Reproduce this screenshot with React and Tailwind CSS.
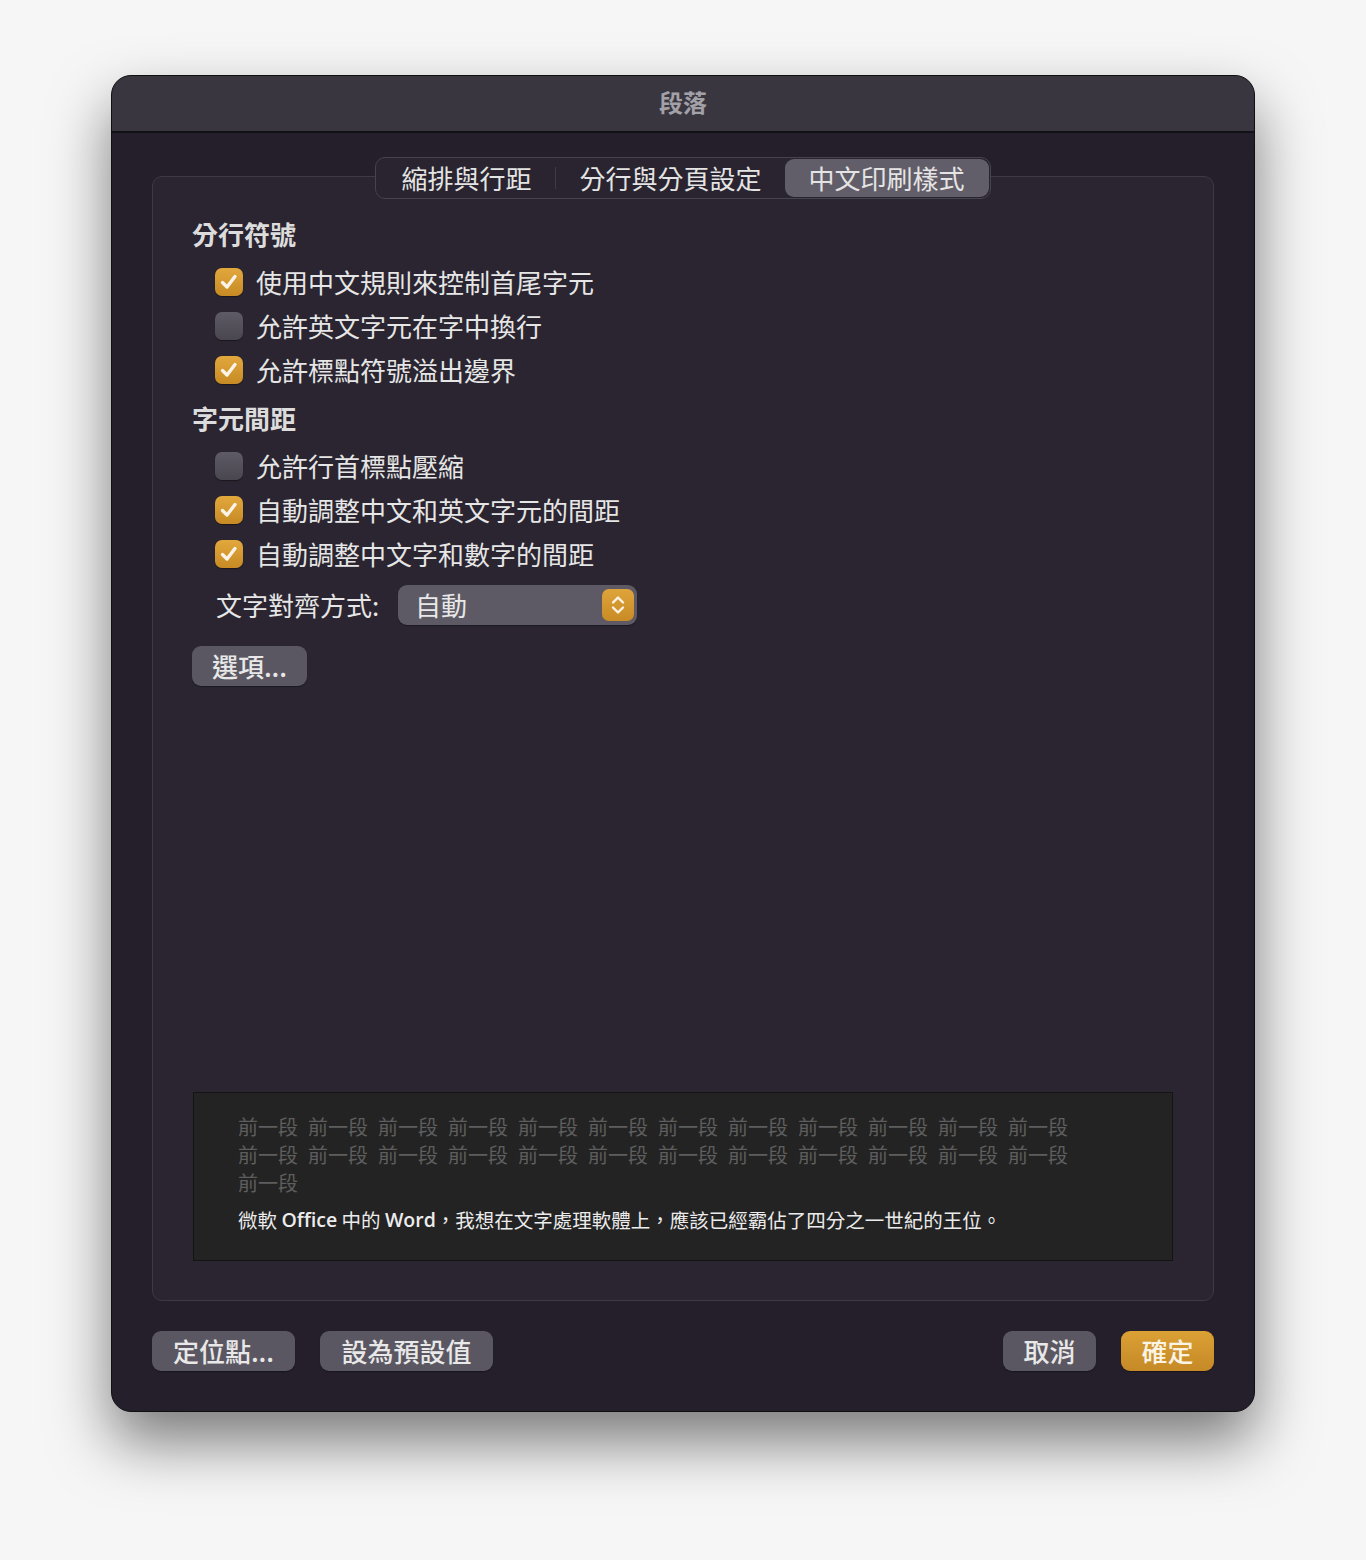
import { useState } from 'react'

const FONT = { fontFamily: '"Noto Sans CJK TC", "Noto Sans", sans-serif' }

function CheckBox({ checked }) {
  return checked ? (
    <span className="flex h-[28px] w-[28px] shrink-0 items-center justify-center rounded-[7px] bg-gradient-to-b from-[#e2a83c] to-[#c78a24] shadow-[0_1px_1px_rgba(0,0,0,0.4)]">
      <svg width="22" height="22" viewBox="0 0 22 22" fill="none">
        <path d="M4.5 11.5 L9 16 L17 5.5" stroke="#fbf4e6" strokeWidth="3.4" strokeLinecap="round" strokeLinejoin="round" />
      </svg>
    </span>
  ) : (
    <span className="block h-[28px] w-[28px] shrink-0 rounded-[7px] bg-gradient-to-b from-[#5f5b66] to-[#4a4650] shadow-[0_1px_1px_rgba(0,0,0,0.4)]" />
  )
}

function Row({ checked, label }) {
  return (
    <div className="flex h-[44px] items-center pl-[22px]">
      <CheckBox checked={checked} />
      <span className="ml-[13px] text-[26px] leading-none text-[#e6e6e6]">{label}</span>
    </div>
  )
}

function Heading({ children, className = '' }) {
  return (
    <div className={'-ml-px flex h-[44px] items-center text-[26px] font-bold leading-none text-[#dcdcdc] ' + className}>
      {children}
    </div>
  )
}

function Btn({ children, className = '' }) {
  return (
    <button
      className={
        'flex h-[40px] items-center justify-center rounded-[9px] bg-[#5b5762] text-[26px] font-medium leading-none text-[#e8e8e8] shadow-[0_1px_1px_rgba(0,0,0,0.35)] ' +
        className
      }
    >
      {children}
    </button>
  )
}

const tabs = ['縮排與行距', '分行與分頁設定', '中文印刷樣式']

export default function App() {
  const [tab] = useState(2)
  const dim = Array.from({ length: 12 }, () => '前一段')

  return (
    <div className="h-[1560px] w-[1366px] bg-[#f6f6f6] pt-[75px]" style={FONT}>
      <div className="ml-[111px] flex h-[1337px] w-[1144px] flex-col overflow-hidden rounded-[20px] border border-[#101012] bg-[#241f2a] shadow-[0_30px_60px_rgba(0,0,0,0.5)]">
        {/* title bar */}
        <div className="flex h-[57px] shrink-0 items-center justify-center border-b-2 border-[#121115] bg-[#39363f] pb-[4px]">
          <span className="text-[24px] font-bold leading-none text-[#a3a1a8]">段落</span>
        </div>

        <div className="flex flex-1 flex-col px-10">
          {/* group box */}
          <div className="mt-[43px] flex h-[1125px] flex-col rounded-[10px] border border-[#3e3a44] bg-[#2a2530] px-10 pb-[39px]">
            <div className="-mt-[20px] flex justify-center">
              <div className="flex h-[42px] items-center rounded-[10px] border border-[#47434d] bg-[#29242f] p-[1px]">
                {tabs.map((t, i) => (
                  <div key={t} className="flex h-full items-center">
                    {i === 1 && <span className="h-[22px] w-px bg-[#403c46]" />}
                    <span
                      className={
                        'flex h-full items-center text-[26px] leading-none text-[#e4e4e4] ' +
                        (i === tab
                          ? 'ml-[23px] rounded-[9px] bg-[#625e69] px-[24px]'
                          : i === 0
                          ? 'pl-[24px] pr-[24px]'
                          : 'pl-[23px] pr-0')
                      }
                    >
                      {t}
                    </span>
                  </div>
                ))}
              </div>
            </div>

            <Heading className="mt-[13px] mb-[4px]">分行符號</Heading>
            <Row checked label="使用中文規則來控制首尾字元" />
            <Row checked={false} label="允許英文字元在字中換行" />
            <Row checked label="允許標點符號溢出邊界" />
            <Heading className="mt-[4px] mb-[4px]">字元間距</Heading>
            <Row checked={false} label="允許行首標點壓縮" />
            <Row checked label="自動調整中文和英文字元的間距" />
            <Row checked label="自動調整中文字和數字的間距" />

            <div className="mt-[9px] flex h-[40px] items-center pl-[23px]">
              <span className="w-[182px] text-[26px] leading-none text-[#e6e6e6]">文字對齊方式:</span>
              <div className="flex h-[40px] w-[239px] items-center justify-between rounded-[9px] bg-[#5e5a65] pl-[17px] pr-[3px] shadow-[0_1px_1px_rgba(0,0,0,0.35)]">
                <span className="text-[26px] leading-none text-[#e8e8e8]">自動</span>
                <span className="flex h-[32px] w-[32px] items-center justify-center rounded-[7px] bg-gradient-to-b from-[#dea43a] to-[#c98b25]">
                  <svg width="18" height="24" viewBox="0 0 18 24" fill="none">
                    <path d="M4 9.5 L9 4.5 L14 9.5" stroke="#fbf4e6" strokeWidth="2.4" strokeLinecap="round" strokeLinejoin="round" />
                    <path d="M4 14.5 L9 19.5 L14 14.5" stroke="#fbf4e6" strokeWidth="2.4" strokeLinecap="round" strokeLinejoin="round" />
                  </svg>
                </span>
              </div>
            </div>

            <Btn className="-ml-px mt-[21px] w-[115px]">選項...</Btn>

            {/* preview */}
            <div className="mt-auto h-[169px] border border-[#141414] bg-[#232323] pl-[44px] pt-[20px]">
              {[12, 12, 1].map((n, li) => (
                <div key={li} className="flex h-[28px] items-center text-[20px] leading-none text-[#5e5e5e]">
                  {dim.slice(0, n).map((d, i) => (
                    <span key={i} className="mr-[10px]">{d}</span>
                  ))}
                </div>
              ))}
              <div className="mt-[9px] flex h-[28px] items-center whitespace-pre text-[19.5px] leading-none text-[#ececec]">
                微軟 <span className="font-semibold" style={{ fontFamily: '"Open Sans", sans-serif' }}>Office</span> 中的 <span className="font-semibold" style={{ fontFamily: '"Open Sans", sans-serif' }}>Word</span>，我想在文字處理軟體上，應該已經霸佔了四分之一世紀的王位。
              </div>
            </div>
          </div>

          {/* footer buttons */}
          <div className="mt-[30px] flex items-center">
            <Btn className="w-[143px]">定位點...</Btn>
            <Btn className="ml-[25px] w-[173px]">設為預設值</Btn>
            <Btn className="ml-auto w-[93px]">取消</Btn>
            <button className="ml-[25px] flex h-[40px] w-[93px] items-center justify-center rounded-[9px] bg-gradient-to-b from-[#dba135] to-[#c58926] text-[26px] font-medium leading-none text-[#fbf3e4] shadow-[0_1px_1px_rgba(0,0,0,0.35)]">
              確定
            </button>
          </div>
        </div>
      </div>
    </div>
  )
}
